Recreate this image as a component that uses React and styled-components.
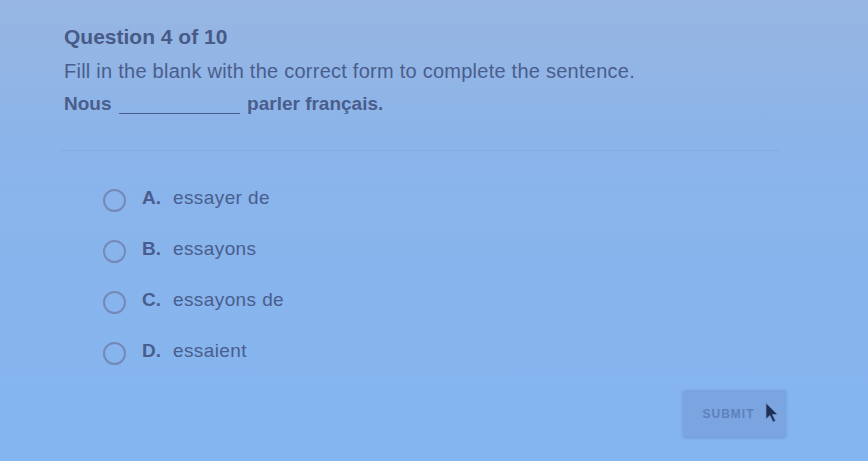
import React, { useState } from "react";
import styled, { createGlobalStyle } from "styled-components";

const GlobalStyle = createGlobalStyle`
  html, body {
    margin: 0;
    padding: 0;
    height: 100%;
  }
  body {
    font-family: "Liberation Sans", Arial, sans-serif;
    background: #88b4ec;
  }
`;

const options = [
  { letter: "A.", text: "essayer de" },
  { letter: "B.", text: "essayons" },
  { letter: "C.", text: "essayons de" },
  { letter: "D.", text: "essaient" },
];

export default function App() {
  const [selected, setSelected] = useState(null);

  return (
    <>
      <GlobalStyle />
      <Page>
        <QuestionBlock>
          <QuestionTitle>Question 4 of 10</QuestionTitle>
          <Instruction>
            Fill in the blank with the correct form to complete the sentence.
          </Instruction>
          <Sentence>
            Nous <Blank /> parler français.
          </Sentence>
        </QuestionBlock>

        <OptionList>
          {options.map((option, i) => (
            <OptionRow key={option.letter} onClick={() => setSelected(i)}>
              <Radio checked={selected === i} />
              <OptionLetter>{option.letter}</OptionLetter>
              <OptionText>{option.text}</OptionText>
            </OptionRow>
          ))}
        </OptionList>

        <Footer>
          <SubmitButton>
            SUBMIT
            <Cursor viewBox="0 0 14 22" aria-hidden="true">
              <path
                d="M1 1 L1 17 L5 13.5 L8 20 L10.5 19 L7.5 12.5 L12.5 12.5 Z"
                fill="#1f2f55"
                stroke="#6f90c8"
                strokeWidth="0.8"
              />
            </Cursor>
          </SubmitButton>
        </Footer>
      </Page>
    </>
  );
}

const Page = styled.div`
  min-height: 461px;
  box-sizing: border-box;
  padding-top: 25px;
  display: flex;
  flex-direction: column;
  color: #4a5d8c;
  background: linear-gradient(
    180deg,
    #97b6e2 0%,
    #8ab4eb 35%,
    #84b5f0 100%
  );
`;

const QuestionBlock = styled.div`
  margin: 0 88px 0 60px;
  padding: 0 0 34px 4px;
  border-bottom: 1px solid rgba(100, 140, 205, 0.2);
  display: flex;
  flex-direction: column;
`;

const QuestionTitle = styled.div`
  font-size: 21px;
  font-weight: 700;
  line-height: 24px;
  color: #485a86;
`;

const Instruction = styled.div`
  margin-top: 10px;
  font-size: 20px;
  line-height: 24px;
  letter-spacing: 0.25px;
`;

const Sentence = styled.div`
  margin-top: 9px;
  font-size: 19px;
  font-weight: 700;
  line-height: 24px;
`;

const Blank = styled.span`
  display: inline-block;
  width: 121px;
  margin: 0 2px;
  border-bottom: 1.5px solid #4a5d8c;
  vertical-align: -4px;
`;

const OptionList = styled.div`
  padding: 21px 0 0 103px;
  display: flex;
  flex-direction: column;
`;

const OptionRow = styled.div`
  height: 51px;
  display: flex;
  align-items: center;
  cursor: pointer;
`;

const Radio = styled.span`
  width: 23px;
  height: 23px;
  box-sizing: border-box;
  border-radius: 50%;
  border: 2px solid #7489b8;
  background: ${(p) => (p.checked ? "#4a5d8c" : "transparent")};
  margin-top: 5px;
  flex-shrink: 0;
`;

const OptionLetter = styled.span`
  margin-left: 16px;
  width: 31px;
  font-size: 19px;
  font-weight: 700;
`;

const OptionText = styled.span`
  font-size: 19px;
  letter-spacing: 0.4px;
`;

const Footer = styled.div`
  display: flex;
  justify-content: flex-end;
  padding: 14px 82px 0 0;
`;

const SubmitButton = styled.button`
  position: relative;
  width: 103px;
  height: 47px;
  border: none;
  border-radius: 3px;
  background: #7ba5e0;
  box-shadow: 0 1px 3px rgba(60, 90, 150, 0.35);
  color: #5f80bd;
  font-family: "Liberation Sans", Arial, sans-serif;
  font-size: 12px;
  font-weight: 700;
  letter-spacing: 1px;
  padding: 0 12px 0 0;
`;

const Cursor = styled.svg`
  position: absolute;
  left: 82px;
  top: 12px;
  width: 14px;
  height: 22px;
`;
